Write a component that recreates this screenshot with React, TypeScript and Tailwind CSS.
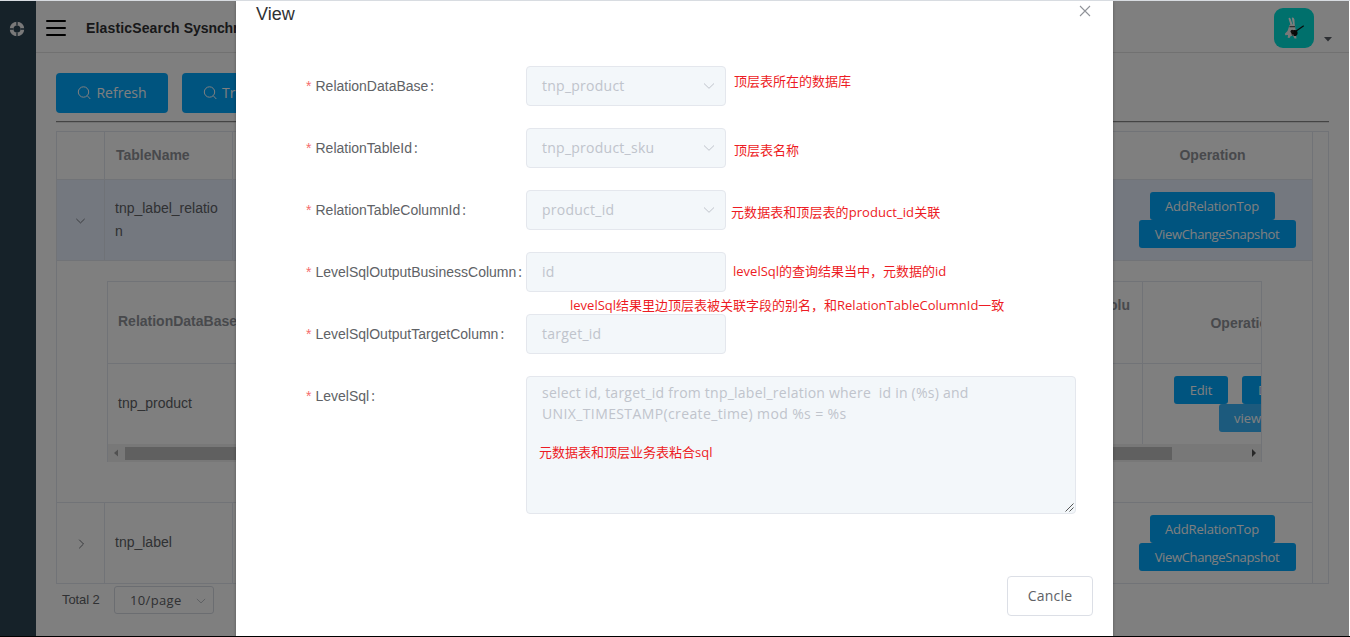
import React from "react";

const UI = "font-['Open_Sans','Noto_Sans_CJK_SC',sans-serif]";

function SearchIcon() {
  return (
    <svg width="14" height="14" viewBox="0 0 14 14" fill="none" stroke="currentColor" strokeWidth="1">
      <circle cx="6.5" cy="6" r="5.2" />
      <path d="M10.300 9.800l3 3.200" />
    </svg>
  );
}

function Chevron({ className = "", right = false }: { className?: string; right?: boolean }) {
  return (
    <svg className={className} width="12" height="12" viewBox="0 0 12 12" fill="none" stroke="currentColor" strokeWidth="1">
      <path d={right ? "M4.200 1.700L8.500 6L4.200 10.300" : "M1 3.500L6 8.300L11 3.500"} />
    </svg>
  );
}

function Avatar() {
  return (
    <div className="h-10 w-10 rounded-[9px] bg-[#00e0d8]">
      <svg width="40" height="40" viewBox="0 0 40 40">
        <path d="M14.500 10.500q1-1.500 2.200.5l2 6h-2.200zM17.800 9.800q2-.8 2.600 1.700l.4 6h-1.600z" fill="#fff" />
        <path d="M15.500 17q3-1.500 5.500.5l.5 4 .5 5.500.5 3.500h-2l-1.200-2.500-2.300-.3-1.500 2.300-1.800-.3.300-2.700-2.800.3-.2-1.800 2.500-2.500z" fill="#f2f2f2" />
        <path d="M15.500 18.200h5.500v1h-5.500z" fill="#333" />
        <circle cx="20.500" cy="25" r="3.100" fill="#111" />
        <circle cx="18.200" cy="23.500" r="1.700" fill="#222" />
        <path d="M21.500 23.500l8.200-5.700" stroke="#111" strokeWidth="1.200" />
        <path d="M18.500 26.500l1.500 1" stroke="#eee" strokeWidth=".8" />
      </svg>
    </div>
  );
}

function SmallButton({ children, className }: { children: React.ReactNode; className: string }) {
  return (
    <button className={`flex h-7 shrink-0 items-center rounded-[3px] text-[13px] whitespace-nowrap text-white ${UI} ${className}`}>
      {children}
    </button>
  );
}

function RowActions() {
  return (
    <div className="flex w-[200px] shrink-0 flex-col items-center pt-3">
      <SmallButton className="w-[125px] justify-center bg-[#00a8ff] tracking-[-0.2px]">AddRelationTop</SmallButton>
      <SmallButton className="ml-[10px] w-[157px] justify-center bg-[#00a8ff] tracking-[-0.36px]">ViewChangeSnapshot</SmallButton>
    </div>
  );
}

function NestedTable() {
  return (
    <div className="ml-[50px] mt-5 h-[181px] w-[1155px] overflow-hidden border border-b-0 border-[#e3e6ee] text-sm">
      <div className="flex h-[82px] border-b border-[#e3e6ee] font-bold text-[#909399]">
        <div className="flex w-[200px] shrink-0 items-center pl-[10px] pb-[3px]">RelationDataBase</div>
        <div className="flex w-[834px] shrink-0 justify-end pr-[12px] pt-[13px]">LevelSqlOutputTargetColu</div>
        <div className="flex w-[202px] shrink-0 items-center justify-center border-l border-[#e3e6ee]">Operation</div>
      </div>
      <div className="flex h-[80px] text-[#606266]">
        <div className="flex w-[1034px] shrink-0 items-center pl-[10px] pb-[3px]">tnp_product</div>
        <div className="w-[202px] shrink-0 border-l border-[#e3e6ee] pt-3">
          <div className="flex gap-[14px] pl-[31px]">
            <SmallButton className="w-[54px] justify-center bg-[#00a8ff] tracking-[-0.2px]">Edit</SmallButton>
            <SmallButton className="w-[72px] bg-[#00a8ff] pl-4">Delete</SmallButton>
          </div>
          <div className="pl-[76px]">
            <SmallButton className="w-[62px] bg-[#38b5fa] pl-[15px]">view</SmallButton>
          </div>
        </div>
      </div>
      <div className="flex h-[18px] items-center bg-[#f1f1f1]">
        <svg width="17" height="18" viewBox="0 0 17 18"><path d="M10 5.500v7L6 9z" fill="#a3a3a3" /></svg>
        <div className="h-[13px] w-[1047px] bg-[#c1c1c1]" />
        <svg className="ml-auto" width="17" height="18" viewBox="0 0 17 18"><path d="M8 5v8l4-4z" fill="#505050" /></svg>
      </div>
    </div>
  );
}

function DataTable() {
  return (
    <div className="flex h-[453px] w-[1273px] border border-[#e3e6ee] text-sm text-[#606266]">
      <div className="w-[1256px] border-r border-[#e3e6ee]">
        <div className="flex h-12 border-b border-[#e3e6ee] font-bold text-[#909399]">
          <div className="w-12 border-r border-[#e3e6ee]" />
          <div className="flex w-32 items-center border-r border-[#e3e6ee] pb-[2px] pl-[11px]">TableName</div>
          <div className="flex-1" />
          <div className="flex w-[200px] items-center justify-center pb-[2px] pl-px">Operation</div>
        </div>
        <div className="flex h-[81px] border-b border-[#e3e6ee] bg-[#e8f0ff]">
          <div className="flex w-12 items-center justify-center border-r border-[#dfe4ee]"><Chevron className="size-[11px] pt-px" /></div>
          <div className="w-32 border-r border-[#dfe4ee] pl-[10px] pt-[17px] leading-[23px]">tnp_label_relatio<br />n</div>
          <div className="flex-1" />
          <RowActions />
        </div>
        <div className="h-[242px] overflow-hidden border-b border-[#e3e6ee]"><NestedTable /></div>
        <div className="flex h-[80px]">
          <div className="flex w-12 items-center justify-center border-r border-[#e3e6ee] pl-px pt-px"><Chevron right className="text-[#73767c]" /></div>
          <div className="flex w-32 items-center border-r border-[#e3e6ee] pl-[10px] pb-[2px]">tnp_label</div>
          <div className="flex-1" />
          <RowActions />
        </div>
      </div>
    </div>
  );
}

function Page() {
  return (
    <div className="flex h-[635px] w-[1349px] bg-white">
      <aside className="w-9 shrink-0 bg-[#2c4453] pl-[9px] pt-[20px]">
        <svg width="16" height="16" viewBox="0 0 16 16" fill="none">
          <circle cx="8" cy="8" r="5.400" stroke="#f2f2f2" strokeWidth="3.800" />
          <path d="M8 0v4.500M8 11.500v4.500M0 8h4.500M11.500 8h4.500" stroke="#2c4453" strokeWidth="1.300" />
        </svg>
      </aside>
      <main className="min-w-0 flex-1">
        <header className="flex h-[52px] border-b border-[#e2e2e2]">
          <div className="ml-[10px] mt-[19px] flex w-5 flex-col gap-[5px]">
            <span className="h-[2px] rounded bg-black" />
            <span className="h-[2px] rounded bg-black" />
            <span className="h-[2px] rounded bg-black" />
          </div>
          <h1 className="ml-5 mt-[17px] text-sm font-bold whitespace-nowrap tracking-[0.15px] text-[#303133]">
            ElasticSearch <span className="tracking-[-0.1px]">Sysnchronize</span>
          </h1>
          <div className="ml-auto mr-[17px] mt-[7px] flex">
            <Avatar />
            <svg className="ml-[10px] mt-[29px]" width="8" height="5" viewBox="0 0 8 5"><path d="M0 0h8L4 4.500z" fill="#5a5e66" /></svg>
          </div>
        </header>
        <div className={`ml-5 mt-5 flex gap-[14px] text-sm text-white ${UI}`}>
          <button className="flex h-10 w-28 items-center justify-center gap-[5px] rounded bg-[#00a8ff]"><SearchIcon />Refresh</button>
          <button className="flex h-10 w-28 items-center gap-[5px] rounded bg-[#00a8ff] pl-[21px]"><SearchIcon />Transfer</button>
        </div>
        <div className="ml-5 mt-2 h-[2px] w-[1273px] border-t border-[#888] bg-[#e4e4e4]" />
        <div className="ml-5 mt-2"><DataTable /></div>
        <div className="ml-[26px] mt-[2px] flex items-center text-[13px] text-[#606266]">
          <span className="w-[52px] pb-px tracking-[-0.1px]">Total 2</span>
          <div className={`flex h-7 w-[100px] items-center justify-between rounded-[3px] border border-[#d6dae2] pl-[15px] pr-[7px] pt-px ${UI}`}>
            <span className="pt-px tracking-[0.35px]">10/page</span><Chevron className="size-[10px] text-[#b0b4bc]" />
          </div>
        </div>
      </main>
    </div>
  );
}

const fields = [
  { label: "RelationDataBase", value: "tnp_product", select: true },
  { label: "RelationTableId", value: "tnp_product_sku", select: true },
  { label: "RelationTableColumnId", value: "product_id", select: true },
  { label: "LevelSqlOutputBusinessColumn", value: "id", select: false },
  { label: "LevelSqlOutputTargetColumn", value: "target_id", select: false },
];

function Label({ text }: { text: string }) {
  return (
    <label className="flex h-10 w-[220px] shrink-0 items-center text-sm whitespace-nowrap text-[#606266]">
      <span className="w-[9.500px] text-[#f56c6c]">*</span>
      {text}
      <span className="ml-[2px] font-['Open_Sans',sans-serif]">:</span>
    </label>
  );
}

function Dialog() {
  return (
    <section className="absolute left-[236px] top-px h-[635px] w-[877px] bg-white shadow-[0_1px_3px_rgba(0,0,0,0.3)]">
      <header className="flex h-[65px] justify-between pl-5 pr-[22px]">
        <h2 className="pt-px text-lg leading-[25px] text-[#303133]">View</h2>
        <svg className="mt-[4px]" width="12" height="12" viewBox="0 0 12 12" stroke="#909399" strokeWidth="1.1"><path d="M1 1l10 10M11 1L1 11" /></svg>
      </header>
      <form className="flex flex-col gap-[22px] pl-[70px]">
        {fields.map((f) => (
          <div key={f.label} className="flex">
            <Label text={f.label} />
            <div className={`flex h-10 w-[200px] items-center justify-between rounded border border-[#e4e7ed] bg-[#f3f7fa] pl-[15px] pr-[10px] text-sm text-[#c0c4cc] ${UI}`}>
              <span className="tracking-[0.25px]">{f.value}</span>
              {f.select && <Chevron />}
            </div>
          </div>
        ))}
        <div className="flex">
          <Label text="LevelSql" />
          <div className={`relative h-[138px] w-[550px] rounded border border-[#e4e7ed] bg-[#f3f7fa] px-[15px] py-[5px] text-sm leading-[21px] whitespace-pre text-[#c0c4cc] ${UI}`}>
            <p className="tracking-[0.23px]">{"select id, target_id from tnp_label_relation where  id in (%s) and"}</p>
            <p className="tracking-[0.38px]">UNIX_TIMESTAMP(create_time) mod %s = %s</p>
            <svg className="absolute right-px bottom-px" width="9" height="9" viewBox="0 0 9 9" stroke="#555" strokeWidth="1">
              <path d="M.5 8.500l8-8M4.500 8.500l4-4" />
            </svg>
          </div>
        </div>
      </form>
      <footer className="mt-[62px] flex justify-end pr-5">
        <button className={`h-10 w-[86px] rounded border border-[#dcdfe6] text-sm text-[#606266] ${UI}`}><span className="tracking-[0.2px]">Cancle</span></button>
      </footer>
    </section>
  );
}

const notes = [
  { pos: "left-[734px] top-[71px]", text: "顶层表所在的数据库" },
  { pos: "left-[734px] top-[140px]", text: "顶层表名称" },
  { pos: "left-[731px] top-[202px] tracking-[0.07px]", text: "元数据表和顶层表的product_id关联" },
  { pos: "left-[733px] top-[261px]", text: "levelSql的查询结果当中，元数据的id" },
  { pos: "left-[570px] top-[295px]", text: "levelSql结果里边顶层表被关联字段的别名，和RelationTableColumnId一致" },
  { pos: "left-[539px] top-[442px]", text: "元数据表和顶层业务表粘合sql" },
];

export default function App() {
  return (
    <div className="relative h-[637px] w-[1350px] overflow-hidden border-t border-[#d8dce1] bg-white font-['Liberation_Sans','Noto_Sans_CJK_SC',sans-serif]">
      <Page />
      <div className="absolute -top-px left-0 h-[637px] w-[1350px]">
        <div className="absolute left-0 top-px h-[635px] w-[1349px] bg-black/50" />
        <Dialog />
        {notes.map((n) => (
          <p key={n.text} className={`absolute text-[13px] leading-5 whitespace-nowrap text-[#ed1c24] ${UI} ${n.pos}`}>{n.text}</p>
        ))}
        <div className="absolute bottom-0 left-0 h-px w-full bg-black" />
      </div>
    </div>
  );
}
